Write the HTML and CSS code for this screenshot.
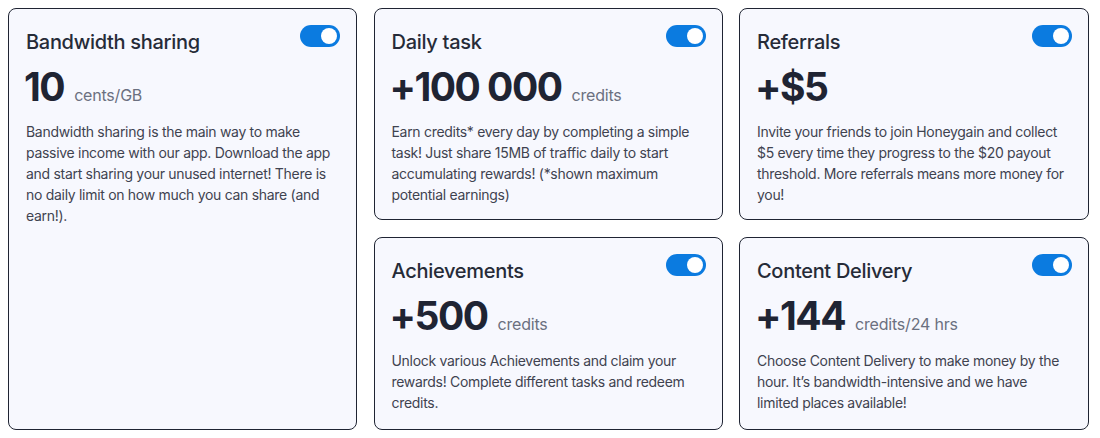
FILE: index.html
```html
<!DOCTYPE html>
<html>
<head>
<meta charset="utf-8">
<link rel="stylesheet" href="styles.css">
</head>
<body>
<div class="grid">
  <div class="card tall">
    <div class="head"><h2 class="title">Bandwidth sharing</h2><span class="toggle"><span class="knob"></span></span></div>
    <div class="amount"><span class="num">10</span><span class="unit">cents/GB</span></div>
    <p class="desc">Bandwidth sharing is the main way to make passive income with our app. Download the app and start sharing your unused internet! There is no daily limit on how much you can share (and earn!).</p>
  </div>
  <div class="card">
    <div class="head"><h2 class="title">Daily task</h2><span class="toggle"><span class="knob"></span></span></div>
    <div class="amount"><span class="num">+100 000</span><span class="unit">credits</span></div>
    <p class="desc">Earn credits* every day by completing a simple task! Just share 15MB of traffic daily to start accumulating rewards! (*shown maximum potential earnings)</p>
  </div>
  <div class="card">
    <div class="head"><h2 class="title">Referrals</h2><span class="toggle"><span class="knob"></span></span></div>
    <div class="amount"><span class="num">+$5</span></div>
    <p class="desc">Invite your friends to join Honeygain and collect $5 every time they progress to the $20 payout threshold. More referrals means more money for you!</p>
  </div>
  <div class="card">
    <div class="head"><h2 class="title">Achievements</h2><span class="toggle"><span class="knob"></span></span></div>
    <div class="amount"><span class="num">+500</span><span class="unit">credits</span></div>
    <p class="desc">Unlock various Achievements and claim your rewards! Complete different tasks and redeem credits.</p>
  </div>
  <div class="card">
    <div class="head"><h2 class="title">Content Delivery</h2><span class="toggle"><span class="knob"></span></span></div>
    <div class="amount"><span class="num">+144</span><span class="unit">credits/24 hrs</span></div>
    <p class="desc">Choose Content Delivery to make money by the hour. It’s bandwidth-intensive and we have limited places available!</p>
  </div>
</div>
</body>
</html>
```
FILE: styles.css
```css
* { box-sizing: border-box; }
body {
  margin: 8px;
  background: #ffffff;
  font-family: Inter, "Noto Sans", sans-serif;
  color: #1f2433;
}
.grid {
  display: grid;
  width: 1081px;
  height: 422px;
  grid-template-columns: 349px 349px 350px;
  grid-template-rows: auto 1fr;
  column-gap: 16.5px;
  row-gap: 17px;
}
.card {
  background: #f7f8fe;
  border: 1px solid #1f2433;
  border-radius: 8px;
  padding: 16px 16px 14px 17px;
}
.tall {
  grid-row: span 2;
}
.head {
  display: flex;
  justify-content: space-between;
  align-items: flex-start;
}
.title {
  margin: 4px 0 0;
  font-size: 20px;
  font-weight: 500;
  line-height: 26px;
  letter-spacing: -0.3px;
  color: #262b38;
}
.toggle {
  width: 40px;
  height: 22px;
  border-radius: 11px;
  background: #0b7be0;
  display: flex;
  align-items: center;
  justify-content: flex-end;
  padding: 0 3px;
  flex-shrink: 0;
}
.knob {
  width: 16px;
  height: 16px;
  border-radius: 50%;
  background: #ffffff;
}
.amount {
  display: flex;
  align-items: baseline;
  gap: 10px;
  margin-top: 8px;
}
.num {
  margin-left: -2px;
  font-size: 39px;
  font-weight: 700;
  line-height: 48px;
  letter-spacing: -1.5px;
  color: #1f2433;
}
.unit {
  font-size: 16px;
  letter-spacing: -0.2px;
  color: #6b7080;
}
.desc {
  margin: 10px 0 0;
  font-size: 14px;
  line-height: 21px;
  letter-spacing: -0.3px;
  color: #3f4350;
}
```
